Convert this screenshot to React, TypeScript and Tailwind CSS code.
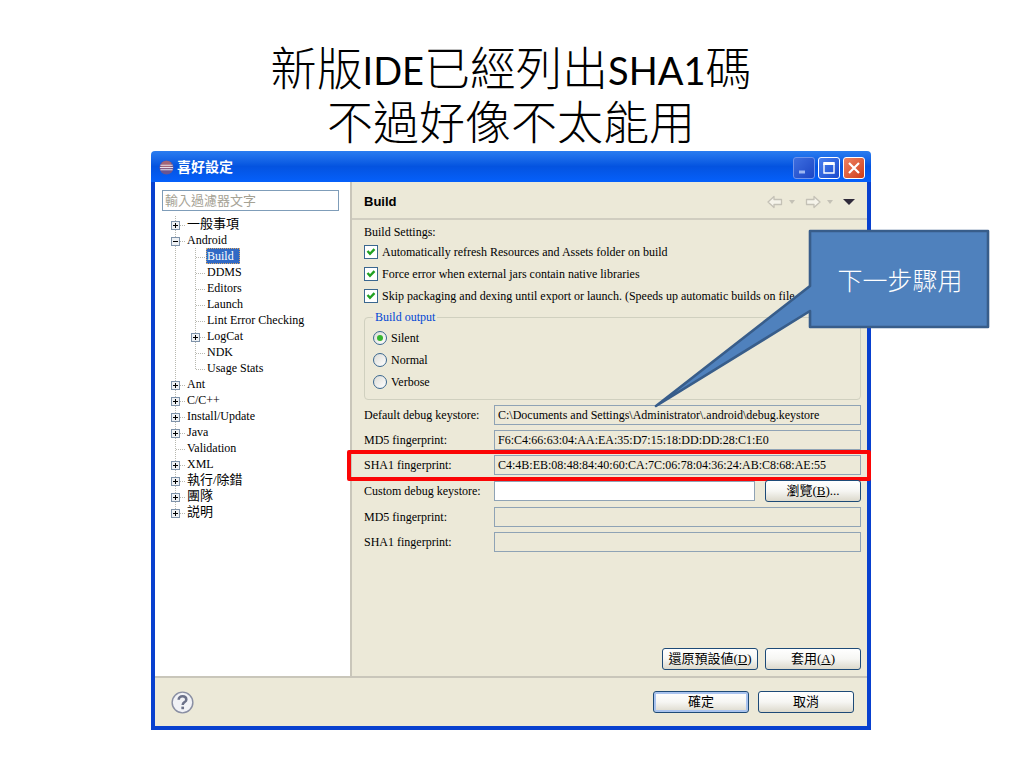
import { useState } from "react"
import type { ReactNode } from "react"
import clsx from "clsx"

type TreeItem = {
  label: string
  level: 0 | 1
  toggle?: "plus" | "minus"
  last?: boolean
}

const TREE: TreeItem[] = [
  { label: "一般事項", level: 0, toggle: "plus" },
  { label: "Android", level: 0, toggle: "minus" },
  { label: "Build", level: 1 },
  { label: "DDMS", level: 1 },
  { label: "Editors", level: 1 },
  { label: "Launch", level: 1 },
  { label: "Lint Error Checking", level: 1 },
  { label: "LogCat", level: 1, toggle: "plus" },
  { label: "NDK", level: 1 },
  { label: "Usage Stats", level: 1, last: true },
  { label: "Ant", level: 0, toggle: "plus" },
  { label: "C/C++", level: 0, toggle: "plus" },
  { label: "Install/Update", level: 0, toggle: "plus" },
  { label: "Java", level: 0, toggle: "plus" },
  { label: "Validation", level: 0 },
  { label: "XML", level: 0, toggle: "plus" },
  { label: "執行/除錯", level: 0, toggle: "plus" },
  { label: "團隊", level: 0, toggle: "plus" },
  { label: "説明", level: 0, toggle: "plus", last: true },
]

const CHECKS = [
  "Automatically refresh Resources and Assets folder on build",
  "Force error when external jars contain native libraries",
  "Skip packaging and dexing until export or launch. (Speeds up automatic builds on file save)",
]

const OUTPUTS = ["Silent", "Normal", "Verbose"]

function TreeNode({ toggle, last }: { toggle?: "plus" | "minus"; last?: boolean }) {
  return (
    <svg className="h-4 w-[15px] shrink-0" viewBox="0 0 15 16" fill="none">
      <path d={last ? "M4.5 0V9" : "M4.5 0V16"} stroke="#b8b8b0" strokeDasharray="1 1" />
      <path d="M5 9.5H14" stroke="#b8b8b0" strokeDasharray="1 1" />
      {toggle && (
        <>
          <rect x="0.5" y="5.5" width="8" height="8" fill="#eef1f4" stroke="#7f93aa" />
          <path d="M2 9.5H7" stroke="#000" />
          {toggle === "plus" && <path d="M4.5 7V12" stroke="#000" />}
        </>
      )}
    </svg>
  )
}

function TreeGuide() {
  return (
    <svg className="h-4 w-5 shrink-0" viewBox="0 0 20 16" fill="none">
      <path d="M4.5 0V16" stroke="#b8b8b0" strokeDasharray="1 1" />
    </svg>
  )
}

function CheckRow({ label }: { label: string }) {
  return (
    <label className="flex h-[22px] items-center gap-1 whitespace-nowrap">
      <span className="grid shrink-0">
        <input
          type="checkbox"
          defaultChecked
          className="peer col-start-1 row-start-1 size-[14px] appearance-none border border-[#3a678f] bg-white"
        />
        <svg
          className="pointer-events-none invisible col-start-1 row-start-1 size-[14px] peer-checked:visible"
          viewBox="0 0 14 14"
          fill="none"
        >
          <path d="M3.5 6L6 8.8L10.5 4.2" stroke="#21a121" strokeWidth="2.4" />
        </svg>
      </span>
      {label}
    </label>
  )
}

function RadioRow({ label, first }: { label: string; first: boolean }) {
  return (
    <label className="flex h-[22px] items-center gap-1">
      <span className="grid shrink-0 place-items-center">
        <input
          type="radio"
          name="output"
          defaultChecked={first}
          className="peer col-start-1 row-start-1 size-[14px] appearance-none rounded-full border border-[#3a678f] bg-linear-to-br from-[#dcdcd7] to-white"
        />
        <span className="pointer-events-none invisible col-start-1 row-start-1 size-1.5 rounded-full bg-[#35b52f] peer-checked:visible" />
      </span>
      {label}
    </label>
  )
}

type FieldProps = { id: string; label: string; value?: string; editable?: boolean; highlight?: boolean; children?: ReactNode }

function Field({ id, label, value = "", editable, highlight, children }: FieldProps) {
  return (
    <div className={clsx("relative flex items-center", editable ? "h-[22px]" : "h-5")}>
      <label htmlFor={id} className="w-[130px] shrink-0 whitespace-nowrap">{label}</label>
      <input
        id={id}
        type="text"
        defaultValue={value}
        readOnly={!editable}
        className={clsx("h-5 min-w-0 flex-1 border border-[#8fa3b5] px-[3px]", editable && "bg-white")}
      />
      {children}
      {highlight && (
        <span className="pointer-events-none absolute -top-[5px] -right-[10px] -bottom-[6px] -left-[17px] rounded-xs border-4 border-[#fb0505]" />
      )}
    </div>
  )
}

function DialogButton({ children, primary, className }: { children: ReactNode; primary?: boolean; className?: string }) {
  return (
    <button
      type="button"
      className={clsx(
        "h-[22px] w-24 rounded-[3px] border border-[#1d4a77] bg-linear-to-b from-white via-[#f6f6f3] to-[#dcd9cc] text-[13px] leading-4 whitespace-nowrap",
        primary && "inset-ring-2 inset-ring-[#a9c3ee]",
        className
      )}
    >
      {children}
    </button>
  )
}

function HistoryArrow({ label, flip }: { label: string; flip?: boolean }) {
  return (
    <button type="button" aria-label={label} className="flex items-center gap-1.5">
      <svg className={clsx("h-[14px] w-4", flip && "-scale-x-100")} viewBox="0 0 16 14" fill="none">
        <path d="M1 7L7 1.5V4.5H14.5V9.5H7V12.5Z" fill="#f5f3ea" stroke="#c4c1b6" strokeWidth="1.3" strokeLinejoin="round" />
      </svg>
      <svg className="h-1 w-[6px]" viewBox="0 0 6 4">
        <path d="M0 0H6L3 4Z" fill="#c4c1b6" />
      </svg>
    </button>
  )
}

function TitleBar() {
  return (
    <div className="flex h-[31px] items-center rounded-t-sm bg-linear-to-b from-[#2a7cf0] via-[#0453e0] to-[#0560fb] pt-0.5 pr-1.5 pl-2">
      <svg className="size-[15px]" viewBox="0 0 16 16">
        <circle cx="8" cy="8" r="7.5" fill="#6a5590" />
        <path d="M3 3A7 7 0 0 1 13 3L12 9H2Z" fill="#b06a70" opacity="0.8" />
        <path d="M1.5 5.5H14.5M1 8H15M1.5 10.5H14.5" stroke="#e8dfe8" strokeWidth="1.1" />
      </svg>
      <h2 className="ml-[3px] flex-1 text-[14px] leading-5 font-bold text-white">喜好設定</h2>
      <div className="flex gap-[3px]">
        <button type="button" aria-label="Minimize" className="size-[22px] rounded-[3px] border border-[#6f93ea] bg-linear-to-br from-[#3e6ee0] to-[#1c45c4]">
          <svg viewBox="0 0 20 20"><path d="M5 14H11" stroke="#9db7f2" strokeWidth="3" /></svg>
        </button>
        <button type="button" aria-label="Maximize" className="size-[22px] rounded-[3px] border border-white bg-linear-to-br from-[#4a80f0] to-[#1a48cc]">
          <svg viewBox="0 0 20 20" fill="none">
            <path d="M5 5.5V15H15V5.5" stroke="#fff" strokeWidth="1.4" />
            <path d="M4.3 5.5H15.7" stroke="#fff" strokeWidth="3" />
          </svg>
        </button>
        <button type="button" aria-label="Close" className="size-[22px] rounded-[3px] border border-white bg-linear-to-br from-[#ee8262] to-[#cf3a12]">
          <svg viewBox="0 0 20 20"><path d="M5 5L15 15M15 5L5 15" stroke="#fff" strokeWidth="2.2" /></svg>
        </button>
      </div>
    </div>
  )
}

export default function App() {
  const [selected, setSelected] = useState("Build")

  return (
    <main className="min-h-screen bg-white pt-[38px] pr-[18px] pb-8 pl-4 font-['Liberation_Serif','Noto_Sans_CJK_TC',serif] text-black">
      <h1 className="pb-[5px] text-center font-['Noto_Sans_CJK_TC',sans-serif] text-[46px] leading-[54px] font-light">
        <span className="block h-[54px]">
          新版<span className="font-['Lato',sans-serif] text-[38px] leading-none font-normal">IDE</span>已經列出
          <span className="font-['Lato',sans-serif] text-[38px] leading-none font-normal">SHA1</span>碼
        </span>
        <span className="block h-[54px]">不過好像不太能用</span>
      </h1>

      <section className="relative mx-auto w-full max-w-[720px] text-[12px] leading-4">
        <TitleBar />
        <div className="border-x-4 border-b-4 border-[#0840cf] bg-[#ece9d8]">
          <div className="flex border-b-2 border-[#c9c6ba]">
            {/* Page tree */}
            <nav className="w-[197px] shrink-0 border-r-2 border-[#c9c6ba] bg-white pt-2 pr-[11px] pl-[7px]">
              <input
                type="text"
                aria-label="輸入過濾器文字"
                placeholder="輸入過濾器文字"
                className="block h-[21px] w-full border border-[#7f9db9] px-0.5 text-[13px] placeholder:text-[#a5a294]"
              />
              <ul className="mt-[5px] pl-[9px]">
                {TREE.map(item => (
                  <li key={item.label} className="flex h-4">
                    {item.level === 1 && <TreeGuide />}
                    <TreeNode toggle={item.toggle} last={item.last} />
                    <button
                      type="button"
                      onClick={() => setSelected(item.label)}
                      className={clsx(
                        "h-4 px-px text-left leading-4 whitespace-nowrap",
                        /^[A-Z]/.test(item.label) ? "text-[12px]" : "text-[13px]",
                        selected === item.label && "bg-[#316ac5] pr-1.5 text-white outline-1 -outline-offset-1 outline-dotted outline-[#d9a86a]"
                      )}
                    >
                      {item.label}
                    </button>
                  </li>
                ))}
              </ul>
            </nav>

            {/* Build page */}
            <div className="flex min-w-0 flex-1 flex-col">
              <header className="flex h-[38px] items-center justify-between border-b-2 border-[#d0cdc0] pt-[3px] pr-3 pl-3">
                <h3 className="font-['Liberation_Sans',sans-serif] text-[13px] font-bold">Build</h3>
                <div className="flex items-center gap-2.5">
                  <HistoryArrow label="Back" />
                  <HistoryArrow label="Forward" flip />
                  <button type="button" aria-label="Menu">
                    <svg className="h-1.5 w-3" viewBox="0 0 12 6"><path d="M0 0H12L6 6Z" fill="#2f2a3a" /></svg>
                  </button>
                </div>
              </header>

              <div className="flex flex-1 flex-col pt-1 pr-1.5 pb-1.5 pl-3">
                <p className="h-[17px]">Build Settings:</p>
                {CHECKS.map(c => <CheckRow key={c} label={c} />)}

                <fieldset className="mt-0.5 rounded-sm border border-[#d0d0bf] px-2 pt-0.5 pb-1.5">
                  <legend className="px-0.5 text-[#0046d5]">Build output</legend>
                  {OUTPUTS.map((o, i) => <RadioRow key={o} label={o} first={i === 0} />)}
                </fieldset>

                <div className="mt-[5px] flex flex-col gap-[5px]">
                  <Field id="keystore" label="Default debug keystore:" value="C:\Documents and Settings\Administrator\.android\debug.keystore" />
                  <Field id="md5" label="MD5 fingerprint:" value="F6:C4:66:63:04:AA:EA:35:D7:15:18:DD:DD:28:C1:E0" />
                  <Field id="sha1" label="SHA1 fingerprint:" value="C4:4B:EB:08:48:84:40:60:CA:7C:06:78:04:36:24:AB:C8:68:AE:55" highlight />
                  <Field id="custom" label="Custom debug keystore:" editable>
                    <DialogButton className="ml-2.5">瀏覽(<u>B</u>)...</DialogButton>
                  </Field>
                  <Field id="custom-md5" label="MD5 fingerprint:" />
                  <Field id="custom-sha1" label="SHA1 fingerprint:" />
                </div>

                <div className="mt-auto flex justify-end gap-[7px] pt-24">
                  <DialogButton>還原預設値(<u>D</u>)</DialogButton>
                  <DialogButton>套用(<u>A</u>)</DialogButton>
                </div>
              </div>
            </div>
          </div>

          <footer className="flex h-12 items-center justify-between pr-[13px] pl-4">
            <button type="button" aria-label="Help">
              <svg className="size-[23px]" viewBox="0 0 24 24" fill="none">
                <circle cx="12" cy="12" r="10.8" fill="#f1f2f6" stroke="#8a8fa3" strokeWidth="1.5" />
                <path d="M8 9.2C8 6.7 9.7 5.6 12 5.6S16 6.9 16 9C16 11.6 12.2 11.6 12.2 14.6" stroke="#6b7189" strokeWidth="2.6" />
                <path d="M12.2 16.3V19" stroke="#6b7189" strokeWidth="2.8" />
              </svg>
            </button>
            <div className="flex gap-[9px]">
              <DialogButton primary>確定</DialogButton>
              <DialogButton>取消</DialogButton>
            </div>
          </footer>
        </div>

        {/* Callout over the dialog */}
        <div className="pointer-events-none absolute top-[78px] left-[503px] h-[180px] w-[336px]">
          <svg className="absolute inset-0 size-full" viewBox="0 0 336 180">
            <path
              d="M156 2H334V98H156V82L2 177L156 57Z"
              fill="#4f81bd"
              stroke="#385d8a"
              strokeWidth="2.6"
              strokeLinejoin="round"
            />
          </svg>
          <p className="absolute top-0 right-0 flex h-[100px] w-[180px] items-center justify-center font-['Noto_Sans_CJK_TC',sans-serif] text-[25px] leading-8 font-light text-white">
            下一步驟用
          </p>
        </div>
      </section>
    </main>
  )
}
